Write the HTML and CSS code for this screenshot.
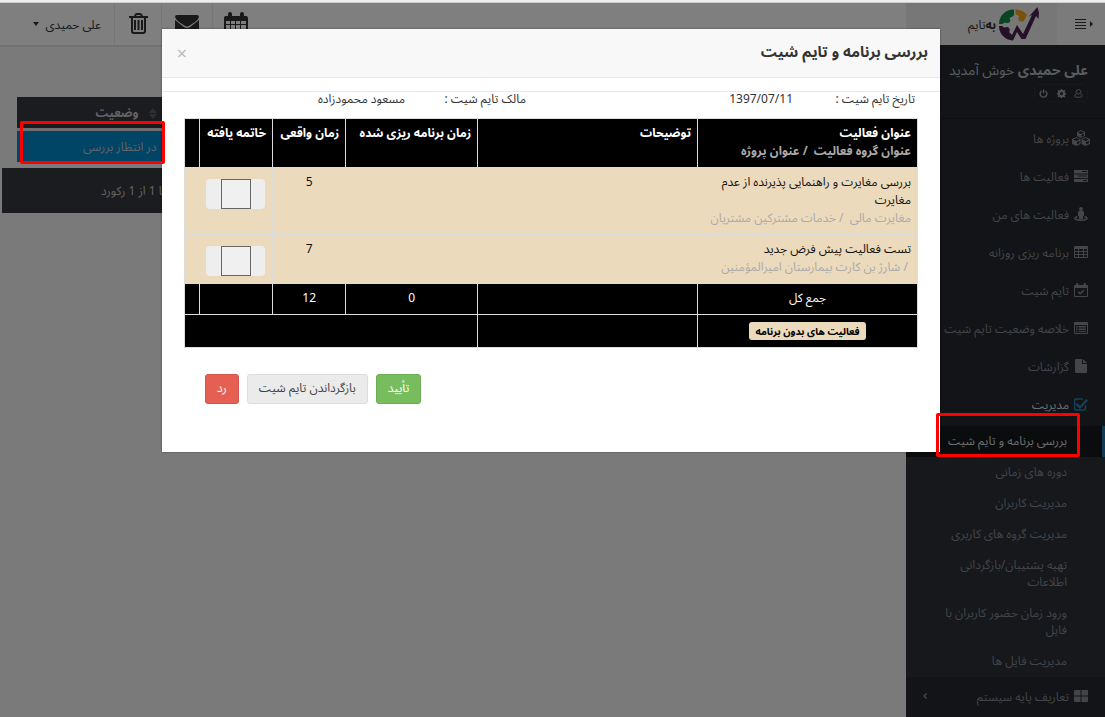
FILE: index.html
```
<!DOCTYPE html>
<html lang="fa" dir="rtl">
<head>
    <meta charset="UTF-8">
    <meta name="viewport" content="width=device-width, initial-scale=1.0">
    <title>بررسی برنامه و تایم شیت</title>
    <link rel="stylesheet" href="styles.css">
</head>
<body>
    <div class="top-strip"></div>
    <div class="page">
        <header class="navbar">
            <button type="button" class="menu-toggle" aria-label="منو">
                <svg class="arrow" viewBox="0 0 4 6"><path d="M0 0l3 3-3 3z"/></svg>
                <svg class="bars" viewBox="0 0 11 10"><path d="M0 0h11v1H0zM0 3h11v1H0zM0 6h11v1H0zM0 9h11v1H0z"/></svg>
            </button>
            <a href="#" class="brand">
                <svg class="logo" viewBox="0 0 40 34">
                    <path d="M15 2.500A14.500 14.500 0 0 0 0 17h3.500c1-1.500 3-1.500 4.500-1 2.500.5 4.500-2 2.500-4.500 1-2 4.500-1.500 4.500-4z" fill="#0f8a48"/>
                    <path d="M16.500 2.500c5 0 9 2 11.500 5.500L25 14c-2 1-5 1-5.500-1.500-.3-1.500 0-2 .5-3-1-2-3.500-1-3.500-3z" fill="#f5a716"/>
                    <path d="M0 19h3.500c1 2 3 1.500 4.500 1 2.500 0 3.500 3 2 5l3 3 5-10 6 9 9-19-3 1.500L38.500 0 40 6l-.5 6-2.500-3-10.500 23h-4L18 25l-4 8.500C6 33 0 27 0 19z" fill="#4c2150"/>
                </svg>
                <span><b>به‌</b>تایم</span>
            </a>
            <nav class="nav-tools">
                <button type="button" class="tool" aria-label="تقویم">
                    <svg viewBox="0 0 24 24"><path fill-rule="evenodd" d="M2 4h2V2q0-2 2-2t2 2v2h8V2q0-2 2-2t2 2v2h2q2 0 2 2v16q0 2-2 2H2q-2 0-2-2V6q0-2 2-2zm0 5v3h4V9zm5 0v3h4V9zm5 0v3h4V9zm5 0v3h5V9zM2 13v4h4v-4zm5 0v4h4v-4zm5 0v4h4v-4zm5 0v4h5v-4zM2 18v4h4v-4zm5 0v4h4v-4zm5 0v4h4v-4zm5 0v4h5v-4z"/></svg>
                </button>
                <button type="button" class="tool tool-wide" aria-label="پیام ها">
                    <svg viewBox="0 0 24 24"><path d="M2 3h20q2 0 2 2-1 3-4 5l-6 4q-2 1-4 0L4 10Q1 8 0 5q0-2 2-2zM0 8l9 7q3 2 6 0l9-7v12q0 2-2 2H2q-2 0-2-2z"/></svg>
                </button>
                <button type="button" class="tool" aria-label="سطل زباله">
                    <svg viewBox="0 0 24 24"><path fill-rule="evenodd" d="M8 4l1-2q0-1 2-1h3q1 0 2 1l1 2h5v2h-2v13q0 3-3 3H8q-3 0-3-3V6H3V4zm2 0h5l-1-1h-3zM7 6v13q0 1 1 1h9q1 0 1-1V6zm1 2h2v10H8zm3.500 0h2v10h-2zm3.500 0h2v10h-2z"/></svg>
                </button>
                <button type="button" class="user-menu">
                    <span>علی حمیدی</span>
                    <svg viewBox="0 0 6 4"><path d="M0 0h6L3 4z"/></svg>
                </button>
            </nav>
        </header>

        <div class="columns">
            <aside class="sidebar">
                <div class="welcome">
                    <p><b>علی حمیدی</b> خوش آمدید</p>
                    <div class="welcome-tools">
                        <button type="button" aria-label="پروفایل"><svg viewBox="0 0 16 16"><path class="line" d="M8 1.500a3.500 3.500 0 0 1 2.500 6.500C13 8.500 14.500 10 14.500 12.500q0 2-2 2h-9q-2 0-2-2C1.500 10 3 8.500 5.500 8A3.500 3.500 0 0 1 8 1.500zM5.500 8q2.500 2 5 0"/></svg></button>
                        <button type="button" aria-label="تنظیمات"><svg viewBox="0 0 16 16"><path fill-rule="evenodd" d="M6.700 0h2.600l.4 2 1.500.7 1.800-1.200 1.800 1.800-1.200 1.800.6 1.500 2 .4v2.600l-2 .4-.6 1.500 1.200 1.800-1.800 1.800-1.800-1.200-1.500.6-.4 2H6.700l-.4-2-1.500-.6L3 15.100l-1.800-1.800 1.200-1.800L1.800 10l-2-.4V7l2-.4.6-1.500L1.200 3.300 3 1.500l1.800 1.200L6.300 2zM8 5.500a2.700 2.700 0 1 0 0 5.400 2.700 2.700 0 0 0 0-5.400z"/></svg></button>
                        <button type="button" aria-label="خروج"><svg viewBox="0 0 16 16"><path class="line thick" d="M4.500 3.500a6 6 0 1 0 7 0M8 1v7"/></svg></button>
                    </div>
                </div>
                <ul class="menu">
                    <li><a href="#"><svg class="cubes" viewBox="0 0 18 16"><path fill-rule="evenodd" d="M9 0l4 2v4l-4 2-4-2V2zm0 1L6 2.500 9 4l3-1.500zM9.500 5v2L12 5.500v-2zM4.500 7l4 2v5l-4 2-4.500-2V9zm0 1L1.500 9.500l3 1.500 3-1.500zM5 12v2.500L7.500 13v-2zM13.500 7L18 9v5l-4.500 2-4-2V9zm0 1l-3 1.500 3 1.500 3-1.500zm.5 4v2.500l3-1.500v-2z"/></svg><span>پروژه ها</span></a></li>
                    <li><a href="#"><svg viewBox="0 0 14 14"><path fill-rule="evenodd" d="M0 1h14v3.500H0zm8 1v1h5V2zM0 5.500h14V9H0zm4 1v1h9v-1zM0 10h14v3H0zm9 1v1h4v-1z"/></svg><span>فعالیت ها</span></a></li>
                    <li><a href="#"><svg viewBox="0 0 14 14"><circle cx="7" cy="2" r="2"/><path d="M5 4h4q1 0 1 1v4H9v3H5V9H4V5q0-1 1-1z"/><path class="line" d="M3.500 9.500C-1 11 1 13.300 7 13.300S15 11 10.500 9.500"/></svg><span>فعالیت های من</span></a></li>
                    <li><a href="#"><svg viewBox="0 0 14 14"><path fill-rule="evenodd" d="M1 1h12q1 0 1 1v10q0 1-1 1H1q-1 0-1-1V2q0-1 1-1zm0 3v2h3V4zm4 0v2h4V4zm5 0v2h3V4zM1 7v2h3V7zm4 0v2h4V7zm5 0v2h3V7zM1 10v2h3v-2zm4 0v2h4v-2zm5 0v2h3v-2z"/></svg><span>برنامه ریزی روزانه</span></a></li>
                    <li><a href="#"><svg viewBox="0 0 14 14"><path fill-rule="evenodd" d="M1 2h1V1q0-1 1-1t1.500 1v1h5V1q0-1 1-1T12 1v1h1q1 0 1 1v10q0 1-1 1H1q-1 0-1-1V3q0-1 1-1zm0 3v8h12V5z"/><path class="line" d="M4 8.500l2.200 2.200L10 7"/></svg><span>تایم شیت</span></a></li>
                    <li><a href="#"><svg viewBox="0 0 14 14"><path fill-rule="evenodd" d="M1 1h12q1 0 1 1v10q0 1-1 1H1q-1 0-1-1V2q0-1 1-1zm0 3v8h12V4zm1 1h1.500v1.500H2zm2.500 0H12v1.500H4.500zM2 7.500h1.500V9H2zm2.500 0H12V9H4.500zM2 10h1.500v1H2zm2.500 0H12v1H4.500z"/></svg><span>خلاصه وضعیت تایم شیت</span></a></li>
                    <li><a href="#"><svg viewBox="0 0 14 14"><path d="M2 0h6v5h5v8q0 1-1 1H2q-1 0-1-1V1q0-1 1-1zm7 0l4 4H9z"/></svg><span>گزارشات</span></a></li>
                    <li class="open">
                        <a href="#"><svg viewBox="0 0 14 14"><path class="line" d="M11.500 8v3q0 2-2 2h-7q-2 0-2-2V4q0-2 2-2H9"/><path d="M3 6l3 3 6-7 2 1.500L6 12 1.500 7.500z"/></svg><span>مدیریت</span></a>
                        <ul class="submenu">
                            <li class="active"><a href="#">بررسی برنامه و تایم شیت</a><span class="mark"></span></li>
                            <li><a href="#">دوره های زمانی</a></li>
                            <li><a href="#">مدیریت کاربران</a></li>
                            <li><a href="#">مدیریت گروه های کاربری</a></li>
                            <li><a href="#">تهیه پشتیبان/بازگردانی اطلاعات</a></li>
                            <li><a href="#">ورود زمان حضور کاربران با فایل</a></li>
                            <li><a href="#">مدیریت فایل ها</a></li>
                        </ul>
                    </li>
                    <li><a href="#"><svg viewBox="0 0 14 14"><path d="M1 1h5.500v5.500H0V2q0-1 1-1zm6.500 0H13q1 0 1 1v4.500H7.500zM0 7.500h6.500V13H1q-1 0-1-1zm7.500 0H14V12q0 1-1 1H7.500z"/></svg><span>تعاریف پایه سیستم</span><svg class="chevron" viewBox="0 0 4 6"><path class="line" d="M3.500.5L1 3l2.500 2.500"/></svg></a></li>
                </ul>
            </aside>

            <main class="content">
                <table class="list">
                    <thead>
                        <tr>
                            <th></th>
                            <th class="status"><svg viewBox="0 0 8 11"><path d="M0 5l4-5 4 5zM0 6h8l-4 5z"/></svg>وضعیت</th>
                        </tr>
                    </thead>
                    <tbody>
                        <tr>
                            <td></td>
                            <td class="status">در انتظار بررسی<span class="mark"></span></td>
                        </tr>
                    </tbody>
                </table>
                <div class="pager">نمایش 1 تا 1 از 1 رکورد</div>
            </main>
        </div>

        <div class="backdrop">
            <section class="modal" role="dialog" aria-labelledby="modalTitle">
                <div class="modal-header">
                    <h1 id="modalTitle">بررسی برنامه و تایم شیت</h1>
                    <button type="button" class="close" aria-label="بستن">×</button>
                </div>
                <div class="modal-body">
                    <dl class="info">
                        <dt>تاریخ تایم شیت :</dt>
                        <dd>1397/07/11</dd>
                        <dt>مالک تایم شیت :</dt>
                        <dd>مسعود محمودزاده</dd>
                    </dl>
                    <table class="sheet">
                        <colgroup>
                            <col class="col-title"><col class="col-title"><col class="col-plan"><col class="col-time"><col class="col-time"><col>
                        </colgroup>
                        <thead>
                            <tr>
                                <th>عنوان فعالیت<div class="sub">عنوان گروه فعالیت &nbsp;/ عنوان پروژه</div></th>
                                <th>توضیحات</th>
                                <th>زمان برنامه ریزی شده</th>
                                <th>زمان واقعی</th>
                                <th>خاتمه یافته</th>
                                <th></th>
                            </tr>
                        </thead>
                        <tbody>
                            <tr>
                                <td>بررسی مغایرت و راهنمایی پذیرنده از عدم مغایرت<div class="sub">مغایرت مالی &nbsp;/ خدمات مشترکین مشتریان</div></td>
                                <td></td>
                                <td></td>
                                <td class="num">5</td>
                                <td><label class="switch"><input type="checkbox" aria-label="خاتمه یافته"></label></td>
                                <td></td>
                            </tr>
                            <tr>
                                <td>تست فعالیت پیش فرض جدید<div class="sub">&nbsp;/ شارژ بن کارت بیمارستان امیرالمؤمنین</div></td>
                                <td></td>
                                <td></td>
                                <td class="num">7</td>
                                <td><label class="switch"><input type="checkbox" aria-label="خاتمه یافته"></label></td>
                                <td></td>
                            </tr>
                        </tbody>
                        <tfoot>
                            <tr>
                                <td class="num">جمع کل</td>
                                <td></td>
                                <td class="num">0</td>
                                <td class="num">12</td>
                                <td></td>
                                <td></td>
                            </tr>
                            <tr>
                                <td class="num"><span class="badge">فعالیت های بدون برنامه</span></td>
                                <td></td>
                                <td colspan="4"></td>
                            </tr>
                        </tfoot>
                    </table>
                    <div class="actions">
                        <button type="button" class="btn btn-success">تأیید</button>
                        <button type="button" class="btn">بازگرداندن تایم شیت</button>
                        <button type="button" class="btn btn-danger">رد</button>
                    </div>
                </div>
            </section>
        </div>
    </div>
</body>
</html>
```
FILE: styles.css
```
* {
    margin: 0;
    padding: 0;
    box-sizing: border-box;
}

body {
    font-family: "Noto Sans", "Noto Sans Arabic", "Open Sans", sans-serif;
    font-size: 12px;
    line-height: 17px;
    color: #333;
    background: #f4f4f4;
    min-height: 100vh;
    display: flex;
    flex-direction: column;
}

a {
    color: inherit;
    text-decoration: none;
}

button {
    font: inherit;
    color: inherit;
    border: none;
    background: none;
    cursor: pointer;
}

ul {
    list-style: none;
}

svg {
    display: block;
    flex: none;
    fill: currentColor;
}

.line {
    fill: none;
    stroke: currentColor;
    stroke-width: 1.5;
}

.line.thick {
    stroke-width: 2.5;
}

.top-strip {
    height: 3px;
    background: #eee;
    border-bottom: 1px solid #ccc;
}

.page {
    position: relative;
    flex: 1;
    display: flex;
    flex-direction: column;
}

/* navbar */
.navbar {
    height: 42px;
    display: flex;
    background: #fff;
}

.menu-toggle {
    width: 48px;
    display: flex;
    align-items: center;
    gap: 4px;
    padding-right: 11px;
    background: #f6f6f6;
}

.arrow {
    width: 4px;
    height: 6px;
}

.bars {
    width: 11px;
    height: 10px;
}

.brand {
    width: 151px;
    display: flex;
    align-items: center;
    gap: 3px;
    padding-right: 18px;
    background: #eee;
}

.logo {
    width: 40px;
    height: 34px;
}

.nav-tools {
    flex: 1;
    display: flex;
    justify-content: flex-end;
}

.tool {
    width: 47px;
    display: flex;
    align-items: center;
    justify-content: center;
    border-left: 1px solid #eee;
}

.tool-wide {
    width: 51px;
}

.tool svg {
    width: 24px;
    height: 24px;
}

.user-menu {
    width: 114px;
    display: flex;
    align-items: center;
    gap: 6px;
    padding-right: 13px;
}

.user-menu svg {
    width: 6px;
    height: 4px;
}

.columns {
    flex: 1;
    display: flex;
}

/* sidebar */
.sidebar {
    width: 199px;
    background: #24282e;
    color: #868a91;
}

.welcome {
    height: 74px;
    padding: 15px 17px 0;
    border-bottom: 1px solid #1c1f24;
    font-size: 14px;
    line-height: 20px;
    color: #b4b8bd;
}

.welcome-tools {
    width: 54px;
    display: flex;
    margin-top: 4px;
    border: 1px solid #2c3037;
    border-radius: 3px;
}

.welcome-tools button {
    flex: 1;
    height: 16px;
    display: flex;
    align-items: center;
    justify-content: center;
    color: #9a9ea4;
}

.welcome-tools svg {
    width: 9px;
    height: 9px;
}

.menu > li > a {
    height: 38px;
    display: flex;
    align-items: center;
    gap: 5px;
    padding: 0 17px;
}

.menu svg {
    width: 14px;
    height: 14px;
}

.menu .cubes {
    width: 18px;
    height: 16px;
    margin: 0 -2px;
}

.menu .chevron {
    width: 4px;
    height: 6px;
    margin-right: auto;
}

.menu .open > a {
    color: #d8dbdf;
}

.open > a svg {
    color: #2b84bb;
}

.submenu {
    margin-top: 3px;
    background: #2d3036;
}

.submenu li {
    position: relative;
}

.submenu a {
    display: block;
    padding: 6px 38px 8px 30px;
}

.submenu .active a {
    padding-left: 0;
    padding-right: 35px;
    border-right: 3px solid #1f76ad;
    background: #17191d;
    color: #d8dbdf;
}

/* highlight frames stay above the dialog */
.mark {
    position: absolute;
    z-index: 20;
    border: 3px solid #f00;
    border-radius: 2px;
}

.submenu .mark {
    inset: -13px 25px 0 30px;
}

/* list behind the dialog */
.content {
    flex: 1;
    padding: 50px 0 0 2px;
    border-top: 2px solid #e4e4e4;
}

.list {
    width: 100%;
    border-collapse: collapse;
    border-left: 15px solid #f4f4f4;
}

.list th {
    height: 32px;
    background: #36383f;
    color: #c4c6ca;
    border-bottom: 3px solid #ddd;
}

.list td {
    height: 33px;
    background: #0089cc;
    color: #c4c6ca;
}

.list .status {
    position: relative;
    width: 156px;
    padding-right: 9px;
    text-align: right;
}

.status svg {
    display: inline-block;
    width: 8px;
    height: 11px;
    margin-left: 10px;
    vertical-align: middle;
    color: #5c5f66;
}

.status .mark {
    inset: -10px 1px -2px 3px;
}

.pager {
    margin-top: 6px;
    padding: 14px 0 14px 99px;
    background: #36383f;
    color: #c4c6ca;
    text-align: left;
}

/* dialog */
.backdrop {
    position: absolute;
    inset: 0;
    z-index: 10;
    background: rgba(0, 0, 0, 0.5);
}

.modal {
    margin: 26px 165px 0 162px;
    background: #fff;
    box-shadow: 0 0 2px rgba(0, 0, 0, 0.4);
}

.modal-header {
    height: 49px;
    display: flex;
    align-items: center;
    justify-content: space-between;
    padding: 0 12px;
    background: #f8f8f8;
    border-bottom: 1px solid #e8e8e8;
}

.modal-header h1 {
    padding-bottom: 4px;
    font-size: 15px;
    line-height: 24px;
}

.close {
    width: 16px;
    font-size: 18px;
    color: #bbb;
}

.modal-body {
    margin-top: 13px;
    padding: 0 22px 48px;
    border-top: 1px solid #e8e8e8;
}

.info {
    display: grid;
    grid-template-columns: 122px 267px 121px 1fr;
    padding-right: 3px;
    margin-bottom: 12px;
    line-height: 14px;
}

.sheet {
    width: 100%;
    table-layout: fixed;
    border-collapse: collapse;
    line-height: 18px;
    color: #111;
}

.col-title {
    width: 30%;
}

.col-plan {
    width: 18%;
}

.col-time {
    width: 10%;
}

.sheet th,
.sheet td {
    padding: 5px 6px 7px;
    border: 1px solid #ddd;
    text-align: right;
    vertical-align: top;
}

.sheet th {
    white-space: nowrap;
    background: #000;
    color: #fff;
}

.sheet tbody td {
    background: #ecdabc;
}

.sheet tfoot td {
    background: #000;
    color: #fff;
}

.sheet .num {
    text-align: center;
}

.sub {
    color: #aaa;
}

.switch {
    width: 59px;
    height: 30px;
    display: flex;
    justify-content: center;
    margin: 6px auto 0;
    border-radius: 4px;
    background: #eee;
}

.switch input {
    width: 30px;
    height: 30px;
    appearance: none;
    border: 1px solid #666;
    background: #f0f0f0;
}

.badge {
    display: inline-block;
    margin-top: 2px;
    padding: 0 6px;
    border-radius: 3px;
    background: #ecdabc;
    color: #000;
    font-size: 10px;
    font-weight: bold;
}

.actions {
    display: flex;
    justify-content: flex-end;
    gap: 8px;
    margin-top: 26px;
    padding-left: 21px;
}

.btn {
    height: 30px;
    padding: 0 11px 3px;
    border: 1px solid #ddd;
    border-radius: 3px;
    background: #ebebeb;
    color: #444;
}

.btn-success {
    border-color: #6cad53;
    background: #78bd5d;
    color: #fff;
}

.btn-danger {
    border-color: #d15548;
    background: #e56053;
    color: #fff;
}
```
